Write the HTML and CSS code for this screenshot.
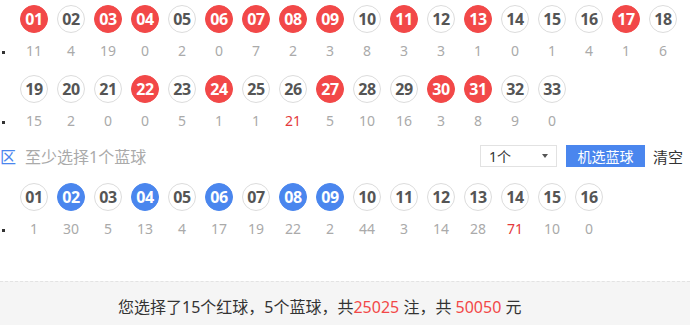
FILE: index.html
```html
<!DOCTYPE html>
<html lang="zh-CN">
<head>
  <meta charset="UTF-8">
  <meta name="viewport" content="width=device-width, initial-scale=1.0">
  <title>选号</title>
  <link rel="stylesheet" href="styles.css">
</head>
<body>
  <div class="picker">

    <!-- 红球区 -->
    <div class="zone red-zone" id="red-zone"></div>

    <!-- 蓝球区 -->
    <div class="zone-head">
      <span class="zone-name">区</span>
      <span class="zone-tip">至少选择1个蓝球</span>
      <div class="zone-tools">
        <div class="select-box">
          <span>1个</span>
          <i class="caret"></i>
        </div>
        <button class="btn-random">机选蓝球</button>
        <span class="btn-clear">清空</span>
      </div>
    </div>
    <div class="zone blue-zone" id="blue-zone"></div>

  </div>

  <div class="footer">
    您选择了15个红球，5个蓝球，共<em>25025</em> 注，共 <em>50050</em> 元
  </div>

  <script>
    // 遗漏值和已选号码
    var redMiss = [11,4,19,0,2,0,7,2,3,8,3,3,1,0,1,4,1,6,15,2,0,0,5,1,1,21,5,10,16,3,8,9,0];
    var redPick = [1,3,4,6,7,8,9,11,13,17,22,24,27,30,31];
    var blueMiss = [1,30,5,13,4,17,19,22,2,44,3,14,28,71,10,0];
    var bluePick = [2,4,6,8,9];

    function pad(n) {
      return n < 10 ? "0" + n : "" + n;
    }

    function buildZone(el, miss, pick, perRow, cls) {
      var max = Math.max.apply(null, miss);
      for (var start = 0; start < miss.length; start += perRow) {
        var group = document.createElement("div");
        group.className = "group";
        var balls = "<div class='balls'>";
        var counts = "<div class='counts'><i class='dot'></i>";
        for (var i = start; i < Math.min(start + perRow, miss.length); i++) {
          var num = i + 1;
          var on = pick.indexOf(num) >= 0 ? " " + cls : "";
          balls += "<span class='ball" + on + "'>" + pad(num) + "</span>";
          var hot = miss[i] === max ? " hot" : "";
          counts += "<span class='count" + hot + "'>" + miss[i] + "</span>";
        }
        group.innerHTML = balls + "</div>" + counts + "</div>";
        el.appendChild(group);
      }
    }

    buildZone(document.getElementById("red-zone"), redMiss, redPick, 18, "on-red");
    buildZone(document.getElementById("blue-zone"), blueMiss, bluePick, 16, "on-blue");
  </script>
</body>
</html>
```

FILE: styles.css
```css
* {
  margin: 0;
  padding: 0;
  box-sizing: border-box;
}

body {
  font-family: "Noto Sans", "Noto Sans CJK SC", sans-serif;
  background: #fff;
  color: #333;
  width: 690px;
  height: 325px;
  overflow: hidden;
}

.picker {
  padding-top: 5px;
}

.group {
  margin-bottom: 14px;
}

.balls {
  display: flex;
  gap: 9px;
  padding-left: 20px;
}

.ball {
  width: 28px;
  height: 28px;
  border-radius: 50%;
  border: 1px solid #dcdcdc;
  background: #fff;
  color: #555;
  font-size: 16px;
  font-weight: bold;
  line-height: 26px;
  text-align: center;
  letter-spacing: -0.3px;
}

.ball.on-red {
  background: #f24848;
  border-color: #f24848;
  color: #fff;
}

.ball.on-blue {
  background: #4a86ee;
  border-color: #4a86ee;
  color: #fff;
}

.counts {
  display: flex;
  gap: 9px;
  padding-left: 20px;
  margin-top: 8px;
  position: relative;
}

.count {
  width: 28px;
  text-align: center;
  font-size: 14px;
  line-height: 20px;
  color: #aaa;
}

.count.hot {
  color: #e4393c;
}

.dot {
  position: absolute;
  left: 2px;
  top: 10px;
  width: 3px;
  height: 3px;
  background: #333;
}

.zone-head {
  display: flex;
  align-items: center;
  height: 22px;
  margin-bottom: 16px;
}

.zone-name {
  color: #4a86ee;
  font-size: 16px;
}

.zone-tip {
  color: #aaa;
  font-size: 16px;
  margin-left: 9px;
}

.zone-tools {
  display: flex;
  align-items: center;
  margin-left: auto;
  margin-right: 7px;
}

.select-box {
  width: 77px;
  height: 22px;
  border: 1px solid #e2e2e2;
  display: flex;
  align-items: center;
  justify-content: space-between;
  padding: 0 8px;
  font-size: 14px;
  color: #333;
}

.caret {
  width: 0;
  height: 0;
  border-left: 3px solid transparent;
  border-right: 3px solid transparent;
  border-top: 4px solid #555;
}

.btn-random {
  width: 79px;
  height: 22px;
  margin-left: 9px;
  background: #4a86ee;
  color: #fff;
  border: none;
  font-family: inherit;
  font-size: 14px;
}

.btn-clear {
  margin-left: 8px;
  font-size: 15px;
  color: #333;
}

.footer {
  margin-top: 42px;
  height: 45px;
  background: #f5f5f5;
  border-top: 1px dashed #e3e3e3;
  padding-left: 118px;
  font-size: 16px;
  line-height: 50px;
  color: #333;
}

.footer em {
  font-style: normal;
  color: #f24848;
}
```
